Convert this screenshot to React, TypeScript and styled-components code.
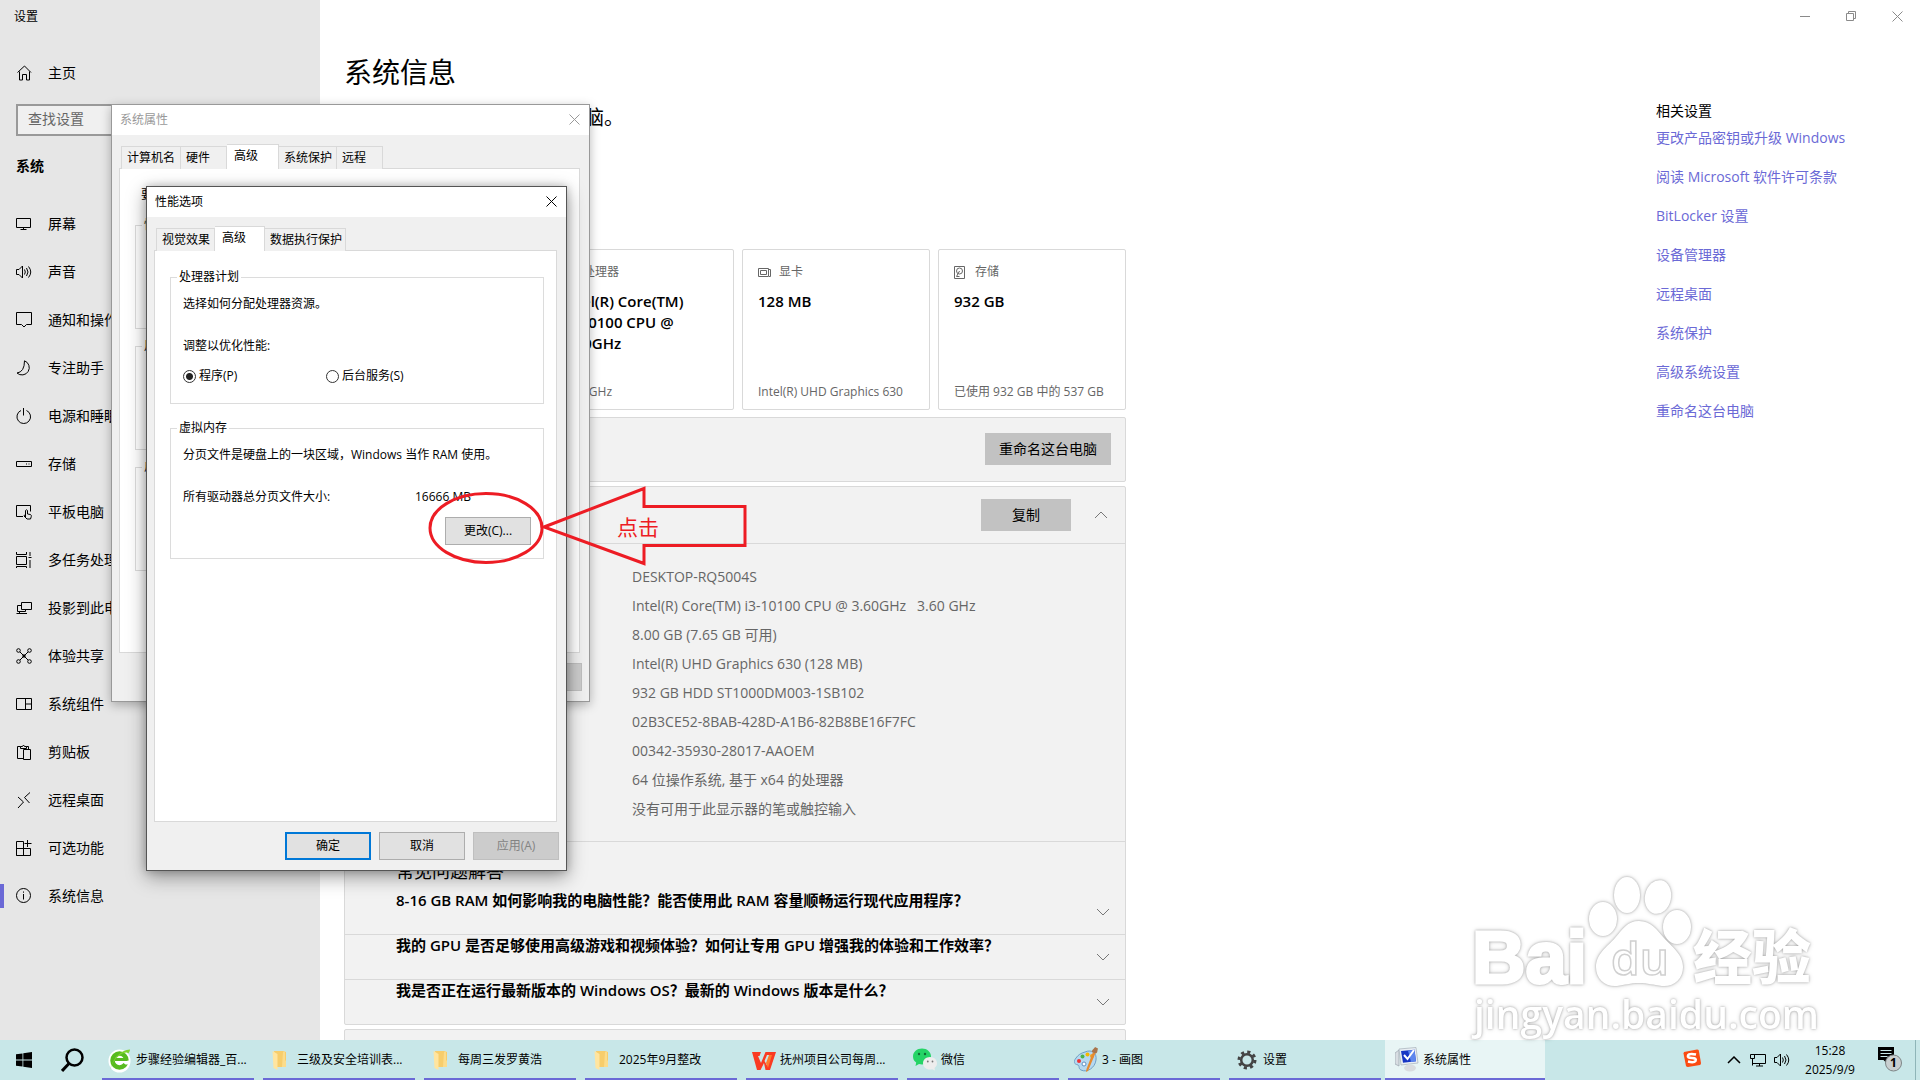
import React from 'react';
import styled, { createGlobalStyle, css } from 'styled-components';

const ACCENT = '#6b69d6';
const RED = '#ed1c24';

const GlobalStyle = createGlobalStyle`
  * { box-sizing: border-box; }
  body {
    margin: 0;
    color: #000;
    font: 14px/20px "Open Sans", "Noto Sans CJK SC", sans-serif;
  }
  h1, h2, h3, p, ul { margin: 0; padding: 0; font-weight: 400; }
  ul { list-style: none; }
  button, input { font: inherit; color: inherit; margin: 0; }
`;

/* ---------- shell ---------- */

const Desktop = styled.div`
  position: relative;
  height: 100vh;
  overflow: hidden;
  display: flex;
  flex-direction: column;
  background: #fff;
`;

const SettingsWindow = styled.div`
  flex: 1;
  min-height: 0;
  display: flex;
  overflow: hidden;
`;

const Line = styled.svg`
  display: block;
  flex: none;
  fill: none;
  stroke: currentColor;
  stroke-width: 1;
`;

/* ---------- sidebar ---------- */

const Sidebar = styled.nav`
  flex: none;
  width: 320px;
  background: #e6e6e6;
`;

const AppName = styled.div`
  height: 49px;
  padding: 7px 14px;
  font-size: 12px;
`;

const NavItem = styled.a<{ $active?: boolean }>`
  display: flex;
  align-items: center;
  gap: 16px;
  height: 48px;
  padding-left: 16px;
  color: #000;
  text-decoration: none;
  white-space: nowrap;
  ${(p) =>
    p.$active &&
    css`
      padding-left: 12px;
      &::before {
        content: '';
        width: 4px;
        height: 24px;
        margin: 0 -4px 0 -12px;
        background: ${ACCENT};
      }
    `}
`;

const Search = styled.input`
  display: block;
  width: 288px;
  height: 32px;
  margin: 7px 16px 20px;
  padding: 0 10px 4px;
  border: 2px solid #999;
  border-radius: 0;
  background: #f0f0f0;
  &::placeholder { color: #666; opacity: 1; }
`;

const NavTitle = styled.h2`
  padding: 0 16px;
  margin-bottom: 24px;
  font-size: 14px;
  line-height: 20px;
  font-weight: 700;
`;

/* ---------- main column ---------- */

const Page = styled.div`
  flex: 1;
  min-width: 0;
  display: flex;
  flex-direction: column;
`;

const WindowBar = styled.div`
  flex: none;
  display: flex;
  justify-content: flex-end;
  height: 32px;
  color: #8a8a8a;
`;

const WindowButton = styled.button`
  display: grid;
  place-items: center;
  width: 46px;
  padding: 0;
  border: 0;
  background: none;
`;

const Columns = styled.div`
  flex: 1;
  min-height: 0;
  display: flex;
  justify-content: space-between;
`;

const Content = styled.main`
  flex: 1;
  max-width: 806px;
  padding: 20px 0 0 24px;
`;

const Title = styled.h1`
  font-size: 28px;
  line-height: 40px;
`;

const Status = styled.p`
  margin: 12px 0 117px;
  font-size: 20px;
  line-height: 28px;
`;

const Cards = styled.div`
  display: grid;
  grid-template-columns: repeat(3, 188px);
  justify-content: end;
  gap: 8px;
  margin-bottom: 7px;
`;

const Card = styled.section`
  display: flex;
  flex-direction: column;
  height: 161px;
  padding: 12px 0 7px 15px;
  border: 1px solid #d9d9d9;
  border-radius: 2px;
  color: #666;
  font-size: 12px;
  white-space: nowrap;
`;

const CardHead = styled.div`
  display: flex;
  align-items: center;
  gap: 5px;
`;

const CardValue = styled.h3`
  flex: 1;
  padding-top: 9px;
  color: #000;
  font-size: 15px;
  line-height: 21px;
  font-weight: 600;
  white-space: pre-line;
`;

const Panel = styled.section`
  margin-bottom: 4px;
  border: 1px solid #d9d9d9;
  border-radius: 2px;
  background: #f2f2f2;
`;

const PanelBar = styled.div<{ $h: number }>`
  display: flex;
  align-items: center;
  justify-content: flex-end;
  height: ${(p) => p.$h}px;
  padding-right: 14px;
`;

const GreyButton = styled.button<{ $wide?: boolean }>`
  width: ${(p) => (p.$wide ? 126 : 90)}px;
  height: 32px;
  margin-bottom: ${(p) => (p.$wide ? 1 : 0)}px;
  padding: 0;
  border: 0;
  background: #c2c2c2;
`;

const Toggle = styled.button`
  display: grid;
  place-items: center;
  width: 40px;
  height: 32px;
  margin-left: 10px;
  margin-right: -10px;
  padding: 0;
  border: 0;
  background: none;
  color: #777;
`;

const Specs = styled.ul`
  padding: 18px 0 18px 287px;
  border-top: 1px solid #d9d9d9;
  color: #666;
  line-height: 29px;
  white-space: pre;
`;

const Faq = styled.div`
  padding-top: 17px;
  border-top: 1px solid #d9d9d9;
`;

const FaqTitle = styled.h2`
  padding-left: 51px;
  font-size: 18px;
  line-height: 24px;
`;

const Question = styled.div`
  display: flex;
  justify-content: space-between;
  height: 45px;
  padding-left: 51px;
  & + & { border-top: 1px solid #d9d9d9; }
  h3 {
    font-size: 15px;
    line-height: 20px;
    font-weight: 600;
    white-space: nowrap;
  }
  button { margin: 6px 2px 0 0; }
  &:first-of-type { height: 51px; }
  &:first-of-type h3 { margin-top: 7px; }
  &:first-of-type button { margin-top: 13px; }
`;

const Related = styled.aside`
  flex: none;
  width: 264px;
  padding-top: 69px;
  white-space: nowrap;
`;

const RelatedTitle = styled.h2`
  margin-bottom: 7px;
  font-size: 14px;
  line-height: 20px;
`;

const RelatedLink = styled.a`
  display: block;
  width: max-content;
  margin-bottom: 19px;
  color: ${ACCENT};
  text-decoration: none;
`;

/* ---------- classic dialogs ---------- */

const Dialog = styled.section<{ $x: number; $y: number; $w: number; $front?: boolean }>`
  position: absolute;
  left: ${(p) => p.$x}px;
  top: ${(p) => p.$y}px;
  width: ${(p) => p.$w}px;
  border: 1px solid ${(p) => (p.$front ? '#555' : '#999')};
  background: #f0f0f0;
  font-size: 12px;
  line-height: 16px;
  box-shadow: ${(p) =>
    p.$front ? '0 6px 18px rgba(0,0,0,.38), 0 0 8px rgba(0,0,0,.2)' : '0 3px 10px rgba(0,0,0,.28)'};
`;

const DialogBar = styled.header<{ $dim?: boolean }>`
  display: flex;
  align-items: center;
  justify-content: space-between;
  height: 30px;
  padding: 0 9px 0 8px;
  background: #fff;
  color: ${(p) => (p.$dim ? '#999' : '#000')};
`;

const CloseButton = styled.button`
  display: grid;
  place-items: center;
  width: 12px;
  height: 12px;
  margin-bottom: 2px;
  padding: 0;
  border: 0;
  background: none;
`;

const DialogBody = styled.div`
  padding: 9px 9px 10px 7px;
`;

const Tabs = styled.div`
  display: flex;
  align-items: flex-end;
  height: 25px;
  padding-left: 2px;
`;

const Tab = styled.button<{ $w: number; $on?: boolean }>`
  width: ${(p) => p.$w}px;
  height: 23px;
  padding: 0 0 0 5px;
  border: 1px solid #d9d9d9;
  border-left-width: 0;
  border-bottom: 0;
  background: #f0f0f0;
  text-align: left;
  white-space: nowrap;
  &:first-child { border-left-width: 1px; }
  ${(p) =>
    p.$on &&
    css`
      height: 25px;
      padding: 0 0 3px 7px;
      background: #fff;
    `}
`;

const TabPanel = styled.div<{ $h: number; $gap: number }>`
  display: flex;
  flex-direction: column;
  gap: ${(p) => p.$gap}px;
  height: ${(p) => p.$h}px;
  margin: -1px 0 10px;
  padding: 18px 12px 0 15px;
  border: 1px solid #d9d9d9;
  background: #fff;
`;

const Group = styled.fieldset<{ $h: number }>`
  height: ${(p) => p.$h}px;
  min-width: 0;
  margin: 0;
  padding: 11px 12px 0;
  border: 1px solid #dcdcdc;
  legend {
    margin-left: -6px;
    padding: 0 2px;
  }
`;

const Lead = styled.p`
  margin: 0 0 5px 6px;
`;

const Note = styled.p`
  margin-bottom: 26px;
  white-space: nowrap;
`;

const Options = styled.div`
  display: flex;
  margin-top: -12px;
  label {
    display: flex;
    align-items: center;
    gap: 3px;
    width: 143px;
  }
  input {
    appearance: none;
    width: 13px;
    height: 13px;
    border: 1px solid #333;
    border-radius: 50%;
    background: #fff;
  }
  input:checked {
    background: radial-gradient(circle, #222 0 3px, #fff 4px);
  }
`;

const SizeRow = styled.div`
  display: grid;
  grid-template-columns: 232px 1fr;
  margin-bottom: 12px;
`;

const Buttons = styled.footer`
  display: flex;
  justify-content: flex-end;
  gap: 8px;
  margin-right: -2px;
`;

const ClassicButton = styled.button<{ $default?: boolean }>`
  display: block;
  width: 86px;
  height: 28px;
  margin-left: auto;
  padding: 0;
  border: ${(p) => (p.$default ? '2px solid #0078d7' : '1px solid #adadad')};
  background: #e1e1e1;
  &:disabled {
    border-color: #bfbfbf;
    background: #ccc;
    color: #838383;
  }
  ${Buttons} & { margin-left: 0; }
`;

/* ---------- overlays ---------- */

const Annotation = styled.svg`
  position: absolute;
  left: 420px;
  top: 480px;
  fill: none;
  stroke: ${RED};
  stroke-width: 3;
`;

const AnnotationText = styled.span`
  position: absolute;
  left: 617px;
  top: 513px;
  color: ${RED};
  font-size: 21px;
  line-height: 28px;
`;

const Watermark = styled.svg`
  position: absolute;
  right: 96px;
  bottom: 39px;
  overflow: visible;
  fill: #fff;
  filter: drop-shadow(0 0 1px rgba(0, 0, 0, 0.25)) drop-shadow(0 0 2px rgba(0, 0, 0, 0.2));
`;

/* ---------- taskbar ---------- */

const Taskbar = styled.footer`
  flex: none;
  display: flex;
  height: 40px;
  background: #c8e7e8;
  font-size: 12px;
  line-height: 16px;
`;

const TaskIcon = styled.button<{ $w: number }>`
  display: grid;
  place-items: center;
  width: ${(p) => p.$w}px;
  padding: 0;
  border: 0;
  background: none;
`;

const Tasks = styled.div`
  flex: 1;
  display: flex;
  gap: 9px;
  padding-left: 6px;
`;

const Task = styled.button<{ $on?: boolean }>`
  display: flex;
  align-items: center;
  gap: 4px;
  width: ${(p) => (p.$on ? 160 : 152)}px;
  margin-left: ${(p) => (p.$on ? -5 : 0)}px;
  padding: 2px 0 0 ${(p) => (p.$on ? 10 : 6)}px;
  border: 0;
  border-bottom: 2px solid ${ACCENT};
  background: ${(p) => (p.$on ? '#e8f5f5' : 'none')};
  white-space: nowrap;
  svg { flex: none; }
`;

const Tray = styled.div`
  display: flex;
  align-items: center;
  padding-right: 4px;
`;

const TrayButton = styled.button<{ $w: number }>`
  display: grid;
  place-items: center;
  width: ${(p) => p.$w}px;
  height: 40px;
  padding: 0;
  border: 0;
  background: none;
`;

const Clock = styled.time`
  width: 72px;
  line-height: 19px;
  text-align: center;
`;

const ShowDesktop = styled.div`
  width: 1px;
  height: 40px;
  margin-left: 2px;
  background: #8fb5b8;
`;

/* ---------- drawings ---------- */

const I = ({ children, size = 16 }: { children: React.ReactNode; size?: number }) => (
  <Line width={size} height={size} viewBox="0 0 16 16" aria-hidden="true">
    {children}
  </Line>
);

const Cross = ({ size = 11 }: { size?: number }) => (
  <Line width={size} height={size} viewBox="0 0 11 11" aria-hidden="true">
    <path d="M.5.5l10 10M10.5.5l-10 10" />
  </Line>
);

const Chevron = ({ up }: { up?: boolean }) => (
  <Line width="14" height="8" viewBox="0 0 14 8" aria-hidden="true">
    <path d={up ? 'M1 7l6-6 6 6' : 'M1 1l6 6 6-6'} />
  </Line>
);

const SpeakerPath = () => (
  <path d="M.5 5.500h2.500l3.500-3.500v12l-3.500-3.500H.5zM8.500 5.500q1.600 2.500 0 5M10.500 4q3 4 0 8M12.500 2.500q4.500 5.500 0 11" />
);

const navItems: { name: string; icon: React.ReactNode }[] = [
  { name: '屏幕', icon: <path d="M.5 2.500h14v9H.5zM7.500 11.500v2M4.500 13.500h6" /> },
  { name: '声音', icon: <SpeakerPath /> },
  { name: '通知和操作', icon: <path d="M.5 .5h15v12h-5l-2.500 2.500-2.500-2.500h-5z" /> },
  { name: '专注助手', icon: <path d="M8.500.800a7.300 7.300 0 1 1-7.500 12.200q7.500-1 7.500-12.200z" /> },
  { name: '电源和睡眠', icon: <path d="M7.500 0v7.500M5 2.500a6.800 6.800 0 1 0 5.500 0" /> },
  { name: '存储', icon: <path d="M.5 5.500h15v5H.5zM10 8h1M12.500 8h1" /> },
  {
    name: '平板电脑',
    icon: (
      <path d="M7 12.500H.5v-11h14v6M9.500 13V6.500q1-1.500 2 0V10l3 .5q1 .5 .8 2l-.8 2.500h-3.500l-3-3q0-1.500 1.500-.5" />
    ),
  },
  {
    name: '多任务处理',
    icon: <path d="M.5 4.500h10v8H.5zM.5 0v2.500h10V0M.5 16v-1.500h10V16M14 0v4M14 8v8M12.500 5.500h3" />,
  },
  { name: '投影到此电脑', icon: <path d="M5.500 2.500h10v7h-10zM5 5.500H1.500v6h8V10M.5 13.500h10.500M3.500 11.500v2" /> },
  {
    name: '体验共享',
    icon: (
      <>
        <circle cx="2.500" cy="2.500" r="1.800" />
        <circle cx="13.500" cy="2.500" r="1.800" />
        <circle cx="2.500" cy="13.500" r="1.800" />
        <circle cx="13.500" cy="13.500" r="1.800" />
        <path d="M4 4l8 8M12 4l-8 8" />
        <circle cx="8" cy="8" r="1.200" fill="currentColor" />
      </>
    ),
  },
  { name: '系统组件', icon: <path d="M.5 2.500h15v11H.5zM9.500 2.500v11M9.500 8h6" /> },
  {
    name: '剪贴板',
    icon: <path d="M7 14.500H1.500v-12h3M4.500 4.500v-2h2q1-3 2 0h2v2zM10.500 2.500h2v2.500M7.500 5.500h7v10h-7z" />,
  },
  { name: '远程桌面', icon: <path d="M2 5l5.500 5L2 16M14 .5L8.500 5.500l5 5.500" /> },
  {
    name: '可选功能',
    icon: <path d="M.5 1.500h7v14h-7zM.5 8.500h14v7h-14M11.500 0v7M8.500 3.500h7" />,
  },
  {
    name: '系统信息',
    icon: (
      <>
        <circle cx="7.500" cy="7.500" r="7" />
        <path d="M7.500 6v5.500M7.500 3.500v1.200" />
      </>
    ),
  },
];

const Folder = () => (
  <svg width="24" height="24" viewBox="0 0 24 24" aria-hidden="true">
    <path d="M5 3h9l3 1v15H7z" fill="#f7cd6b" />
    <path d="M14 4l2-1v9l1 1v6h-4z" fill="#fbdc8b" />
    <path d="M3.500 3l5 3v16l-4-2z" fill="#ffe5a0" />
  </svg>
);

const Browser = () => (
  <svg width="24" height="26" viewBox="0 0 24 26" aria-hidden="true">
    <ellipse cx="11.500" cy="14" rx="11" ry="11.500" fill="#fff" />
    <circle cx="11.500" cy="13.500" r="7" fill="none" stroke="#58bb1f" strokeWidth="4.500" />
    <path d="M12 13.500h10v4h-4.500z" fill="#fff" />
    <path d="M7 12.500h12.500" stroke="#58bb1f" strokeWidth="3" />
    <path d="M2 23C4 12 13 3 22 2.500c0 1.500-1 3-2 4C19 3.500 6 8 2 23z" fill="#7ed32c" />
  </svg>
);

const Wps = () => (
  <svg width="24" height="24" viewBox="0 0 24 24" aria-hidden="true">
    <path d="M0 4h9l-1.500 4H6l3 7L13.500 4H24l-6 18h-4.500L12 15l-3.500 7H5z" fill="#fa3a22" />
    <path d="M15 7l-2.500 6 2.500 4.500L19 7z" fill="#c9e8e8" />
    <path d="M17 7h3l-4 13-2-5z" fill="#ff7a2b" />
  </svg>
);

const WeChat = () => (
  <svg width="24" height="24" viewBox="0 0 24 24" aria-hidden="true">
    <path d="M9 0.500c5 0 9 3.500 9 8s-4 8-9 8c-1 0-2-.2-3-.5L2.500 18l.7-3.500C1 13 0 11 0 8.500c0-4.500 4-8 9-8z" fill="#25d466" />
    <path d="M17 9c4 0 7 2.800 7 6.200 0 2-1 3.600-2.500 4.800l.5 2.500-2.700-1.300c-5 1.300-9.300-1.700-9.300-6C10 11.800 13 9 17 9z" fill="#ededed" />
    <circle cx="6" cy="6" r="1.200" fill="#116b35" />
    <circle cx="12" cy="6" r="1.200" fill="#116b35" />
    <circle cx="14.800" cy="13.500" r=".9" fill="#777" />
    <circle cx="19.500" cy="13.500" r=".9" fill="#777" />
  </svg>
);

const Paint = () => (
  <svg width="24" height="26" viewBox="0 0 24 26" aria-hidden="true">
    <path d="M11 5c7-3 12 1 11 8-1 8-9 13-15 10-3-1.500-1-4-3-5-4-1-5-3-2-7 2-3 5-5 9-6z" fill="#b5d8f0" stroke="#6f9fc4" />
    <circle cx="5" cy="14" r="2" fill="#e33" />
    <circle cx="8.500" cy="9.500" r="2" fill="#4bb34b" />
    <circle cx="13.500" cy="7.500" r="2" fill="#f5b800" />
    <circle cx="18" cy="9" r="2" fill="#f0a020" />
    <circle cx="10" cy="17" r="2" fill="#fff" stroke="#5f8fc0" />
    <path d="M19 5l2.500 1L14 24l-2 1 .5-3z" fill="#e58b2f" />
    <path d="M18 5c-.5-2 2-3 3-5l3 1.500C23 4 24 6 21.500 6.500z" fill="#a9744a" />
  </svg>
);

const Gear = () => (
  <svg width="24" height="24" viewBox="0 0 24 24" aria-hidden="true" fill="none" stroke="#444">
    <circle cx="12" cy="12" r="5.800" strokeWidth="2.500" />
    <circle cx="12" cy="12" r="8" strokeWidth="3" strokeDasharray="3.140 3.140" />
  </svg>
);

const SystemIcon = () => (
  <svg width="24" height="26" viewBox="0 0 24 26" aria-hidden="true">
    <path d="M0 6l4-3v16l-4-2z" fill="#d8dde2" stroke="#9aa4ad" strokeWidth=".7" />
    <path d="M4 2l17-1.500 2 15.500-17 2z" fill="#e9eef3" stroke="#a5afb8" strokeWidth=".7" />
    <path d="M6 4l13.500-1.200 1.500 11.500-13 1.500z" fill="#1736c4" />
    <path d="M13 3.500l6.500-.7 1.500 11.500-5 .6z" fill="#5c86ee" />
    <path d="M9 8l3.500 4L19 3" fill="none" stroke="#fff" strokeWidth="2" />
    <ellipse cx="15" cy="21" rx="6" ry="3.500" fill="#d9dcdf" />
  </svg>
);

const tasks: { name: string; icon: React.ReactNode; on?: boolean }[] = [
  { name: '步骤经验编辑器_百...', icon: <Browser /> },
  { name: '三级及安全培训表...', icon: <Folder /> },
  { name: '每周三发罗黄浩', icon: <Folder /> },
  { name: '2025年9月整改', icon: <Folder /> },
  { name: '抚州项目公司每周...', icon: <Wps /> },
  { name: '微信', icon: <WeChat /> },
  { name: '3 - 画图', icon: <Paint /> },
  { name: '设置', icon: <Gear /> },
  { name: '系统属性', icon: <SystemIcon />, on: true },
];

const specs = [
  'DESKTOP-RQ5004S',
  'Intel(R) Core(TM) i3-10100 CPU @ 3.60GHz   3.60 GHz',
  '8.00 GB (7.65 GB 可用)',
  'Intel(R) UHD Graphics 630 (128 MB)',
  '932 GB HDD ST1000DM003-1SB102',
  '02B3CE52-8BAB-428D-A1B6-82B8BE16F7FC',
  '00342-35930-28017-AAOEM',
  '64 位操作系统, 基于 x64 的处理器',
  '没有可用于此显示器的笔或触控输入',
];

const questions = [
  '8-16 GB RAM 如何影响我的电脑性能？能否使用此 RAM 容量顺畅运行现代应用程序？',
  '我的 GPU 是否足够使用高级游戏和视频体验？如何让专用 GPU 增强我的体验和工作效率？',
  '我是否正在运行最新版本的 Windows OS？最新的 Windows 版本是什么？',
];

const related = [
  '更改产品密钥或升级 Windows',
  '阅读 Microsoft 软件许可条款',
  'BitLocker 设置',
  '设备管理器',
  '远程桌面',
  '系统保护',
  '高级系统设置',
  '重命名这台电脑',
];

export default function App() {
  return (
    <Desktop>
      <GlobalStyle />
      <SettingsWindow>
        <Sidebar>
          <AppName>设置</AppName>
          <NavItem href="#home">
            <I>
              <path d="M1.500 7.500L8.500 1l6.500 6.500M3.500 6.500v8.500h3V9.500h4V15h3V6.500" />
            </I>
            主页
          </NavItem>
          <Search type="search" placeholder="查找设置" aria-label="查找设置" />
          <NavTitle>系统</NavTitle>
          {navItems.map((n) => (
            <NavItem key={n.name} href="#" $active={n.name === '系统信息'}>
              <I>{n.icon}</I>
              {n.name}
            </NavItem>
          ))}
        </Sidebar>

        <Page>
          <WindowBar>
            <WindowButton aria-label="最小化">
              <Line width="10" height="11" viewBox="0 0 10 11">
                <path d="M0 5.500h10" />
              </Line>
            </WindowButton>
            <WindowButton aria-label="还原">
              <Line width="10" height="10" viewBox="0 0 10 10">
                <path d="M.5 2.500h7v7h-7zM2.500 2V.5h7v7H8" />
              </Line>
            </WindowButton>
            <WindowButton aria-label="关闭">
              <Cross />
            </WindowButton>
          </WindowBar>
          <Columns>
            <Content>
              <Title>系统信息</Title>
              <Status>系统正在监控并保护你的电脑。</Status>
              <Cards>
                <Card>
                  <CardHead>
                    <I>
                      <path d="M3.500 3.500h9v9h-9zM6 6h4v4H6z" />
                    </I>
                    处理器
                  </CardHead>
                  <CardValue>{'Intel(R) Core(TM)\ni3-10100 CPU @\n3.60GHz'}</CardValue>
                  <p>3.60 GHz</p>
                </Card>
                <Card>
                  <CardHead>
                    <I>
                      <path d="M.5 4.500h10v8H.5zM2.500 6.500h6v4h-6zM11 5.500h1.500v7H11" />
                    </I>
                    显卡
                  </CardHead>
                  <CardValue>128 MB</CardValue>
                  <p>Intel(R) UHD Graphics 630</p>
                </Card>
                <Card>
                  <CardHead>
                    <I>
                      <path d="M.5 2.500h10v12H.5z" />
                      <circle cx="5.500" cy="7" r="3" />
                      <path d="M5.500 7l-3 5.500h3" />
                    </I>
                    存储
                  </CardHead>
                  <CardValue>932 GB</CardValue>
                  <p>已使用 932 GB 中的 537 GB</p>
                </Card>
              </Cards>
              <Panel>
                <PanelBar $h={63}>
                  <GreyButton $wide>重命名这台电脑</GreyButton>
                </PanelBar>
              </Panel>
              <Panel>
                <PanelBar $h={56}>
                  <GreyButton>复制</GreyButton>
                  <Toggle aria-label="收起">
                    <Chevron up />
                  </Toggle>
                </PanelBar>
                <Specs>
                  {specs.map((s) => (
                    <li key={s}>{s}</li>
                  ))}
                </Specs>
                <Faq>
                  <FaqTitle>常见问题解答</FaqTitle>
                  {questions.map((q) => (
                    <Question key={q}>
                      <h3>{q}</h3>
                      <Toggle aria-label={q}>
                        <Chevron />
                      </Toggle>
                    </Question>
                  ))}
                </Faq>
              </Panel>
              <Panel>
                <PanelBar $h={63} />
              </Panel>
            </Content>
            <Related>
              <RelatedTitle>相关设置</RelatedTitle>
              {related.map((r) => (
                <RelatedLink key={r} href="#">
                  {r}
                </RelatedLink>
              ))}
            </Related>
          </Columns>
        </Page>
      </SettingsWindow>

      <Taskbar>
        <TaskIcon $w={48} aria-label="开始">
          <svg width="16" height="16" viewBox="0 0 16 16">
            <path d="M0 2.300L6.500 1.400v6.200H0zM7.300 1.300L16 0v7.600H7.300zM0 8.400h6.500v6.200L0 13.700zM7.300 8.400H16V16l-8.700-1.300z" />
          </svg>
        </TaskIcon>
        <TaskIcon $w={48} aria-label="搜索">
          <Line width="23" height="24" viewBox="0 0 23 24">
            <circle cx="13.500" cy="9.500" r="8" strokeWidth="2.500" />
            <path d="M8 15.500L1 23" strokeWidth="3" />
          </Line>
        </TaskIcon>
        <Tasks>
          {tasks.map((t) => (
            <Task key={t.name} $on={t.on}>
              {t.icon}
              {t.name}
            </Task>
          ))}
        </Tasks>
        <Tray>
          <TrayButton $w={64} aria-label="输入法">
            <svg width="30" height="22" viewBox="0 0 30 22">
              <path d="M9 3l13-2.500q1.500 0 1.800 1L26 14q0 1.500-1 2l-12 2q-1.500 0-2-1L8.500 4.500z" fill="#fb4b12" />
              <path d="M21 5.500q-7-1.500-8 1t4 2.500 3.500 3q-1.500 2-7.500.5" fill="none" stroke="#fff" strokeWidth="2.500" />
            </svg>
          </TrayButton>
          <TrayButton $w={24} aria-label="显示隐藏的图标">
            <Line width="14" height="8" viewBox="0 0 14 8">
              <path d="M1 7l6-6 6 6" strokeWidth="1.500" />
            </Line>
          </TrayButton>
          <TrayButton $w={24} aria-label="网络">
            <I>
              <path d="M4 2.500h11.500v9H3M.5 2.500h4v4h-4zM2.500 6.500v7M9.500 11.500v2.500M6 14h7" />
            </I>
          </TrayButton>
          <TrayButton $w={24} aria-label="音量">
            <I>
              <SpeakerPath />
            </I>
          </TrayButton>
          <Clock dateTime="2025-09-09T15:28">
            15:28
            <br />
            2025/9/9
          </Clock>
          <TrayButton $w={47} aria-label="通知">
            <svg width="26" height="26" viewBox="0 0 26 26">
              <path d="M1 0h16v13h-5.500L9 15.500 6.500 13H1z" />
              <path d="M3.500 3.500h11M3.500 6.500h11M3.500 9.500h7" stroke="#c8e7e8" />
              <circle cx="16.500" cy="16" r="8" fill="#c9cfd0" stroke="#7d8586" />
              <text x="16.500" y="20" textAnchor="middle" fontSize="12" fontWeight="700">
                1
              </text>
            </svg>
          </TrayButton>
          <ShowDesktop />
        </Tray>
      </Taskbar>

      <Dialog $x={111} $y={104} $w={479} aria-label="系统属性">
        <DialogBar $dim>
          系统属性
          <CloseButton aria-label="关闭">
            <Cross />
          </CloseButton>
        </DialogBar>
        <DialogBody>
          <Tabs>
            <Tab $w={60}>计算机名</Tab>
            <Tab $w={46}>硬件</Tab>
            <Tab $w={52} $on>
              高级
            </Tab>
            <Tab $w={58}>系统保护</Tab>
            <Tab $w={46}>远程</Tab>
          </Tabs>
          <TabPanel $h={485} $gap={9}>
            <Lead>要</Lead>
            <Group $h={112}>
              <legend>性能</legend>
            </Group>
            <Group $h={112}>
              <legend>用户</legend>
            </Group>
            <Group $h={112}>
              <legend>启动</legend>
            </Group>
          </TabPanel>
          <Buttons>
            <ClassicButton disabled aria-label="应用" />
          </Buttons>
        </DialogBody>
      </Dialog>

      <Dialog $x={146} $y={186} $w={421} $front aria-label="性能选项">
        <DialogBar>
          性能选项
          <CloseButton aria-label="关闭">
            <Cross />
          </CloseButton>
        </DialogBar>
        <DialogBody>
          <Tabs>
            <Tab $w={59}>视觉效果</Tab>
            <Tab $w={50} $on>
              高级
            </Tab>
            <Tab $w={81}>数据执行保护</Tab>
          </Tabs>
          <TabPanel $h={572} $gap={16}>
            <Group $h={135}>
              <legend>处理器计划</legend>
              <Note>选择如何分配处理器资源。</Note>
              <Note>调整以优化性能:</Note>
              <Options>
                <label>
                  <input type="radio" name="schedule" defaultChecked />
                  程序(P)
                </label>
                <label>
                  <input type="radio" name="schedule" />
                  后台服务(S)
                </label>
              </Options>
            </Group>
            <Group $h={139}>
              <legend>虚拟内存</legend>
              <Note>分页文件是硬盘上的一块区域，Windows 当作 RAM 使用。</Note>
              <SizeRow>
                <span>所有驱动器总分页文件大小:</span>
                <span>16666 MB</span>
              </SizeRow>
              <ClassicButton>更改(C)...</ClassicButton>
            </Group>
          </TabPanel>
          <Buttons>
            <ClassicButton $default>确定</ClassicButton>
            <ClassicButton>取消</ClassicButton>
            <ClassicButton disabled>应用(A)</ClassicButton>
          </Buttons>
        </DialogBody>
      </Dialog>

      <Annotation width="330" height="90" aria-hidden="true">
        <ellipse cx="66" cy="48" rx="56" ry="34.500" />
        <path d="M124 47L224 8.500v18h101v39H224V83.500z" />
      </Annotation>
      <AnnotationText>点击</AnnotationText>

      <Watermark width="350" height="170" viewBox="0 0 350 170" aria-hidden="true">
        <text
          x="-2"
          y="112"
          fontFamily="Liberation Sans"
          fontWeight="700"
          fontSize="74"
          stroke="#fff"
          strokeWidth="3"
        >
          Bai
        </text>
        <ellipse cx="129" cy="48" rx="14" ry="17" />
        <ellipse cx="153" cy="24" rx="13" ry="18" />
        <ellipse cx="184" cy="26" rx="13" ry="17" transform="rotate(12 184 26)" />
        <ellipse cx="203" cy="56" rx="14" ry="17" />
        <path d="M165 50c12 0 18 9 25 17s19 16 19 29c0 12-9 20-21 19-9-1-14-3-23-3s-14 2-22 3c-12 1-21-7-21-19 0-13 11-20 19-29s12-17 24-17z" />
        <text
          x="137"
          y="104"
          fontFamily="Open Sans"
          fontWeight="600"
          fontSize="46"
          stroke="#d0d0d0"
          strokeWidth="1.500"
        >
          du
        </text>
        <text x="219" y="108" fontFamily="Noto Sans CJK SC" fontWeight="900" fontSize="59">
          经验
        </text>
        <text x="0" y="158" fontFamily="Open Sans" fontSize="39" fontWeight="600">
          jingyan.baidu.com
        </text>
      </Watermark>
    </Desktop>
  );
}
